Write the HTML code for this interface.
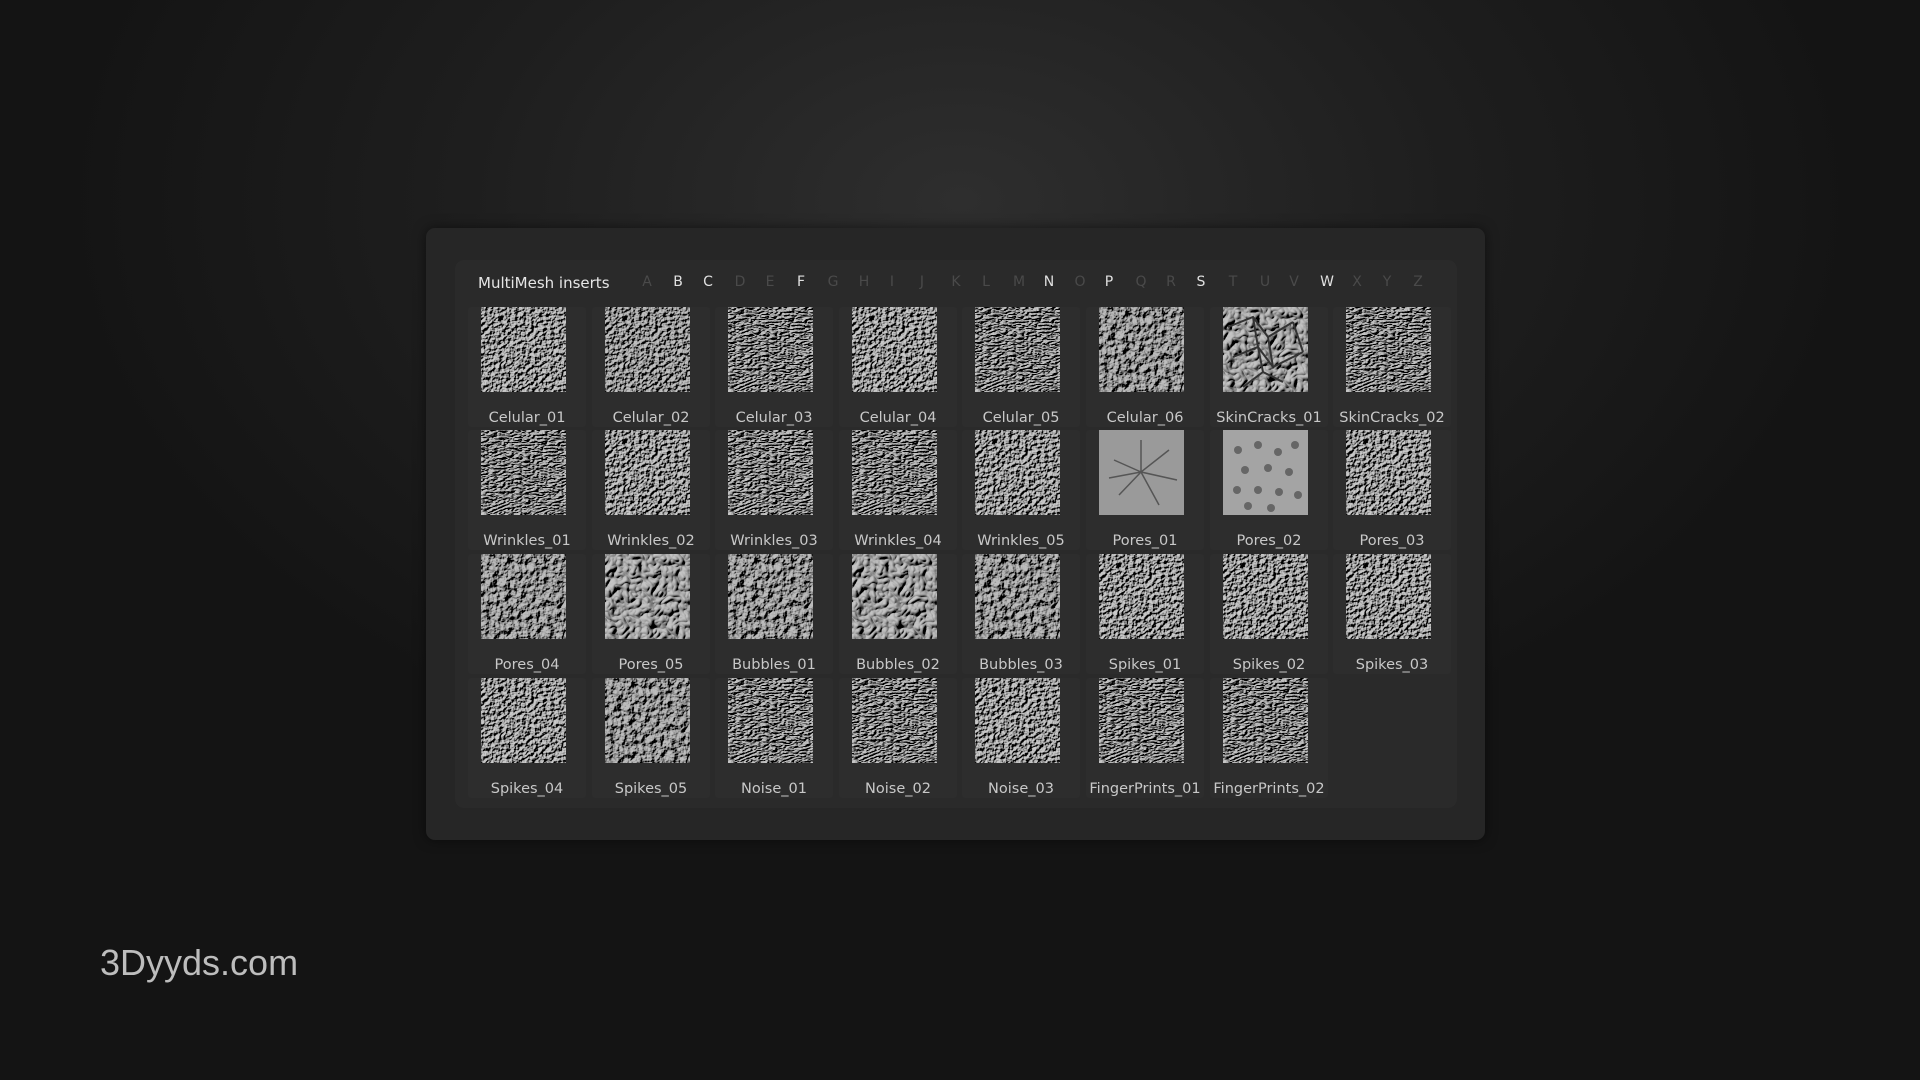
<!DOCTYPE html>
<html><head><meta charset="utf-8">
<style>
html,body{margin:0;padding:0;width:1920px;height:1080px;overflow:hidden}
body{background:radial-gradient(ellipse 900px 600px at 960px 200px,#2e2e2e 0%,#1e1e1e 55%,#141414 100%);font-family:"DejaVu Sans","Liberation Sans",sans-serif;position:relative}
.outer{position:absolute;left:426px;top:228px;width:1059px;height:612px;background:#262626;border-radius:9px;box-shadow:0 0 12px rgba(0,0,0,.5)}
.inner{position:absolute;left:455px;top:260px;width:1002px;height:548px;background:#2a2a2a;border-radius:9px}
.title{position:absolute;left:478px;top:274px;color:#e6e6e6;font-size:15px}
.lt{position:absolute;top:274px;font-size:14px;width:20px;text-align:center;color:#4a4a4a}
.lt.on{color:#e0e0e0}
.cell{position:absolute;width:118px;height:120px;background:#2d2d2d;border-radius:3px}
.cell svg{position:absolute;left:13px;top:0;width:85px;height:85px}
.cell span{position:absolute;left:-10px;width:138px;top:103px;text-align:center;color:#c8c8c8;font-size:14.5px;white-space:nowrap}
.wm{position:absolute;left:100px;top:942px;font-family:"Liberation Sans",sans-serif;font-size:36px;color:#bdbdbd}
</style></head><body>
<svg width="0" height="0" style="position:absolute">
<defs>
<filter id="a" x="0" y="0" width="100%" height="100%"><feTurbulence type="fractalNoise" baseFrequency="0.25" numOctaves="2" seed="2"/><feDiffuseLighting surfaceScale="5" lighting-color="#c4c4c4" diffuseConstant="1.1"><feDistantLight azimuth="225" elevation="40"/></feDiffuseLighting></filter>
<filter id="b" x="0" y="0" width="100%" height="100%"><feTurbulence type="turbulence" baseFrequency="0.12 0.3" numOctaves="2" seed="5"/><feDiffuseLighting surfaceScale="6" lighting-color="#c0c0c0" diffuseConstant="1.1"><feDistantLight azimuth="225" elevation="40"/></feDiffuseLighting></filter>
<filter id="c" x="0" y="0" width="100%" height="100%"><feTurbulence type="fractalNoise" baseFrequency="0.14" numOctaves="3" seed="9"/><feDiffuseLighting surfaceScale="6" lighting-color="#b8b8b8" diffuseConstant="1.1"><feDistantLight azimuth="225" elevation="40"/></feDiffuseLighting></filter>
<filter id="d" x="0" y="0" width="100%" height="100%"><feTurbulence type="turbulence" baseFrequency="0.08" numOctaves="2" seed="3"/><feDiffuseLighting surfaceScale="5" lighting-color="#bdbdbd" diffuseConstant="1.1"><feDistantLight azimuth="225" elevation="40"/></feDiffuseLighting></filter>
</defs></svg>
<div class="outer"></div>
<div class="inner"></div>
<div class="title">MultiMesh inserts</div>
<div class="lt" style="left:637px">A</div><div class="lt on" style="left:668px">B</div><div class="lt on" style="left:698px">C</div><div class="lt" style="left:730px">D</div><div class="lt" style="left:760px">E</div><div class="lt on" style="left:791px">F</div><div class="lt" style="left:823px">G</div><div class="lt" style="left:854px">H</div><div class="lt" style="left:882px">I</div><div class="lt" style="left:912px">J</div><div class="lt" style="left:946px">K</div><div class="lt" style="left:976px">L</div><div class="lt" style="left:1009px">M</div><div class="lt on" style="left:1039px">N</div><div class="lt" style="left:1070px">O</div><div class="lt on" style="left:1099px">P</div><div class="lt" style="left:1131px">Q</div><div class="lt" style="left:1161px">R</div><div class="lt on" style="left:1191px">S</div><div class="lt" style="left:1223px">T</div><div class="lt" style="left:1255px">U</div><div class="lt" style="left:1284px">V</div><div class="lt on" style="left:1317px">W</div><div class="lt" style="left:1347px">X</div><div class="lt" style="left:1377px">Y</div><div class="lt" style="left:1408px">Z</div>

<!-- row 1 -->
<div class="cell" style="left:468px;top:307px"><svg><rect width="85" height="85" filter="url(#a)"/></svg><span>Celular_01</span></div>
<div class="cell" style="left:592px;top:307px"><svg><rect width="85" height="85" filter="url(#a)" opacity=".95"/></svg><span>Celular_02</span></div>
<div class="cell" style="left:715px;top:307px"><svg><rect width="85" height="85" filter="url(#b)"/></svg><span>Celular_03</span></div>
<div class="cell" style="left:839px;top:307px"><svg><rect width="85" height="85" filter="url(#a)"/></svg><span>Celular_04</span></div>
<div class="cell" style="left:962px;top:307px"><svg><rect width="85" height="85" filter="url(#b)"/></svg><span>Celular_05</span></div>
<div class="cell" style="left:1086px;top:307px"><svg><rect width="85" height="85" filter="url(#c)"/></svg><span>Celular_06</span></div>
<div class="cell" style="left:1210px;top:307px"><svg><rect width="85" height="85" filter="url(#d)"/><path d="M5 20L30 10L45 30L70 15M10 50L35 40L50 60L80 45M20 80L40 65L60 75M30 10L35 40L40 65M45 30L50 60M70 15L80 45" stroke="#333" stroke-width="2" fill="none"/></svg><span>SkinCracks_01</span></div>
<div class="cell" style="left:1333px;top:307px"><svg><rect width="85" height="85" filter="url(#b)"/></svg><span>SkinCracks_02</span></div>
<!-- row 2 -->
<div class="cell" style="left:468px;top:430px"><svg><rect width="85" height="85" filter="url(#b)"/></svg><span>Wrinkles_01</span></div>
<div class="cell" style="left:592px;top:430px"><svg><rect width="85" height="85" filter="url(#a)"/></svg><span>Wrinkles_02</span></div>
<div class="cell" style="left:715px;top:430px"><svg><rect width="85" height="85" filter="url(#b)"/></svg><span>Wrinkles_03</span></div>
<div class="cell" style="left:839px;top:430px"><svg><rect width="85" height="85" filter="url(#b)"/></svg><span>Wrinkles_04</span></div>
<div class="cell" style="left:962px;top:430px"><svg><rect width="85" height="85" filter="url(#a)"/></svg><span>Wrinkles_05</span></div>
<div class="cell" style="left:1086px;top:430px"><svg><rect width="85" height="85" fill="#9a9a9a"/><path d="M42 42L15 30M42 42L70 20M42 42L60 75M42 42L20 65M42 42L42 10M42 42L78 50M42 42L10 48" stroke="#555" stroke-width="1.5"/></svg><span>Pores_01</span></div>
<div class="cell" style="left:1210px;top:430px"><svg><rect width="85" height="85" fill="#a4a4a4"/><g fill="#666"><circle cx="15" cy="20" r="4"/><circle cx="35" cy="15" r="4"/><circle cx="55" cy="22" r="4"/><circle cx="72" cy="15" r="4"/><circle cx="22" cy="40" r="4"/><circle cx="45" cy="38" r="4"/><circle cx="66" cy="42" r="4"/><circle cx="14" cy="60" r="4"/><circle cx="35" cy="60" r="4"/><circle cx="56" cy="62" r="4"/><circle cx="75" cy="65" r="4"/><circle cx="25" cy="76" r="4"/><circle cx="48" cy="78" r="4"/></g></svg><span>Pores_02</span></div>
<div class="cell" style="left:1333px;top:430px"><svg><rect width="85" height="85" filter="url(#a)"/></svg><span>Pores_03</span></div>
<!-- row 3 -->
<div class="cell" style="left:468px;top:554px"><svg><rect width="85" height="85" filter="url(#c)"/></svg><span>Pores_04</span></div>
<div class="cell" style="left:592px;top:554px"><svg><rect width="85" height="85" filter="url(#d)"/></svg><span>Pores_05</span></div>
<div class="cell" style="left:715px;top:554px"><svg><rect width="85" height="85" filter="url(#c)"/></svg><span>Bubbles_01</span></div>
<div class="cell" style="left:839px;top:554px"><svg><rect width="85" height="85" filter="url(#d)"/></svg><span>Bubbles_02</span></div>
<div class="cell" style="left:962px;top:554px"><svg><rect width="85" height="85" filter="url(#c)"/></svg><span>Bubbles_03</span></div>
<div class="cell" style="left:1086px;top:554px"><svg><rect width="85" height="85" filter="url(#a)"/></svg><span>Spikes_01</span></div>
<div class="cell" style="left:1210px;top:554px"><svg><rect width="85" height="85" filter="url(#a)"/></svg><span>Spikes_02</span></div>
<div class="cell" style="left:1333px;top:554px"><svg><rect width="85" height="85" filter="url(#a)"/></svg><span>Spikes_03</span></div>
<!-- row 4 -->
<div class="cell" style="left:468px;top:678px"><svg><rect width="85" height="85" filter="url(#a)"/></svg><span>Spikes_04</span></div>
<div class="cell" style="left:592px;top:678px"><svg><rect width="85" height="85" filter="url(#c)"/></svg><span>Spikes_05</span></div>
<div class="cell" style="left:715px;top:678px"><svg><rect width="85" height="85" filter="url(#b)"/></svg><span>Noise_01</span></div>
<div class="cell" style="left:839px;top:678px"><svg><rect width="85" height="85" filter="url(#b)"/></svg><span>Noise_02</span></div>
<div class="cell" style="left:962px;top:678px"><svg><rect width="85" height="85" filter="url(#a)"/></svg><span>Noise_03</span></div>
<div class="cell" style="left:1086px;top:678px"><svg><rect width="85" height="85" filter="url(#b)"/></svg><span>FingerPrints_01</span></div>
<div class="cell" style="left:1210px;top:678px"><svg><rect width="85" height="85" filter="url(#b)"/></svg><span>FingerPrints_02</span></div>

<div class="wm">3Dyyds.com</div>
</body></html>
